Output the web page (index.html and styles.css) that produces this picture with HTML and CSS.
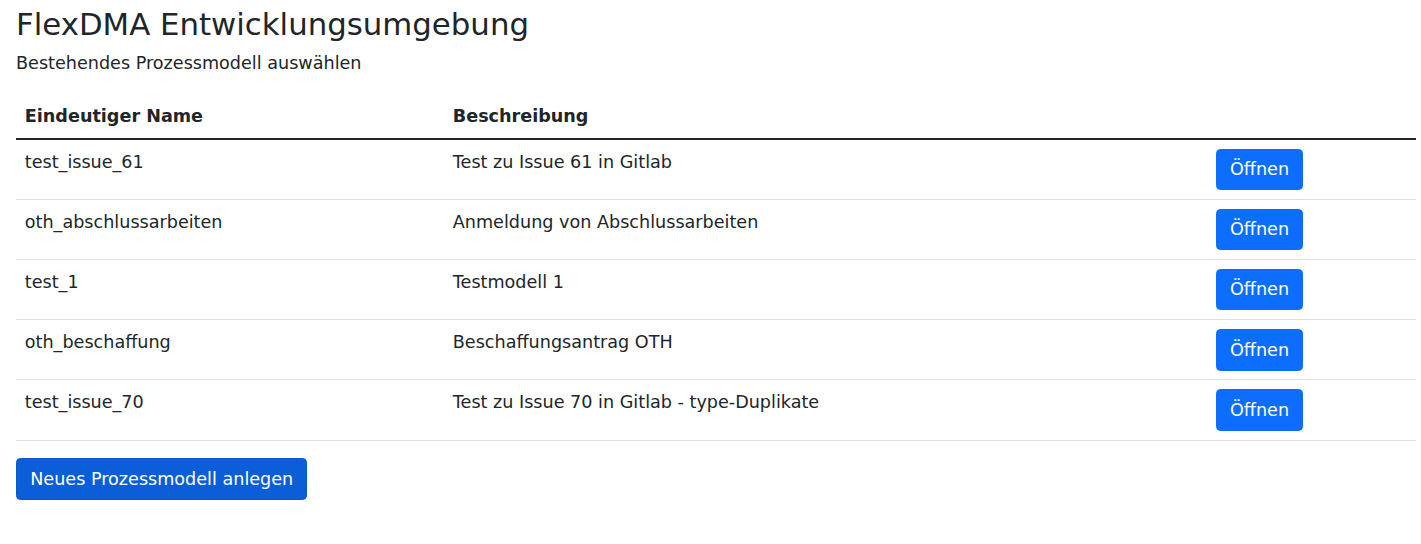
FILE: index.html
```html
<!DOCTYPE html>
<html lang="de">
<head>
<meta charset="utf-8">
<title>FlexDMA Entwicklungsumgebung</title>
<link rel="stylesheet" href="styles.css">
</head>
<body>
<main class="page">
  <h3 class="title">FlexDMA Entwicklungsumgebung</h3>
  <p class="subtitle">Bestehendes Prozessmodell auswählen</p>
  <table class="models">
    <thead>
      <tr>
        <th class="col-name">Eindeutiger Name</th>
        <th class="col-desc">Beschreibung</th>
        <th class="col-act"></th>
      </tr>
    </thead>
    <tbody>
      <tr><td>test_issue_61</td><td>Test zu Issue 61 in Gitlab</td><td><button class="btn">Öffnen</button></td></tr>
      <tr><td>oth_abschlussarbeiten</td><td>Anmeldung von Abschlussarbeiten</td><td><button class="btn">Öffnen</button></td></tr>
      <tr><td>test_1</td><td>Testmodell 1</td><td><button class="btn">Öffnen</button></td></tr>
      <tr><td>oth_beschaffung</td><td>Beschaffungsantrag OTH</td><td><button class="btn">Öffnen</button></td></tr>
      <tr><td>test_issue_70</td><td>Test zu Issue 70 in Gitlab - type-Duplikate</td><td><button class="btn">Öffnen</button></td></tr>
    </tbody>
  </table>
  <button class="btn btn-active">Neues Prozessmodell anlegen</button>
</main>
</body>
</html>
```

FILE: styles.css
```css
html {
  font-size: 17.6px;
}
body {
  margin: 0;
  font-family: "DejaVu Sans", sans-serif;
  font-size: 1rem;
  line-height: 1.5;
  color: #212529;
  background: #fff;
}
.page {
  padding: 5.5px 5px 0 16px;
}
.title {
  margin: 0 0 7.3px 0;
  font-size: 1.75rem;
  font-weight: 500;
  line-height: 1.2;
}
.subtitle {
  margin: 0 0 1rem 0;
}
.models {
  width: 1400px;
  border-collapse: collapse;
  margin-bottom: 1rem;
  color: #212529;
}
.models th,
.models td {
  padding: 0.5rem;
  text-align: left;
  vertical-align: top;
  border-bottom: 1px solid #dee2e6;
}
.models th {
  font-weight: 700;
}
.models thead th {
  border-bottom: 2px solid #212529;
}
.col-name { width: 428px; box-sizing: border-box; }
.col-desc { width: 763px; box-sizing: border-box; }
.btn {
  display: inline-block;
  font-family: inherit;
  font-size: 1rem;
  line-height: 1.5;
  padding: 0.375rem 0.75rem;
  color: #fff;
  background: #0d6efd;
  border: 1px solid #0d6efd;
  border-radius: 0.25rem;
  cursor: pointer;
}
.btn-active {
  background: #0b5ed7;
  border-color: #0a58ca;
}
```
